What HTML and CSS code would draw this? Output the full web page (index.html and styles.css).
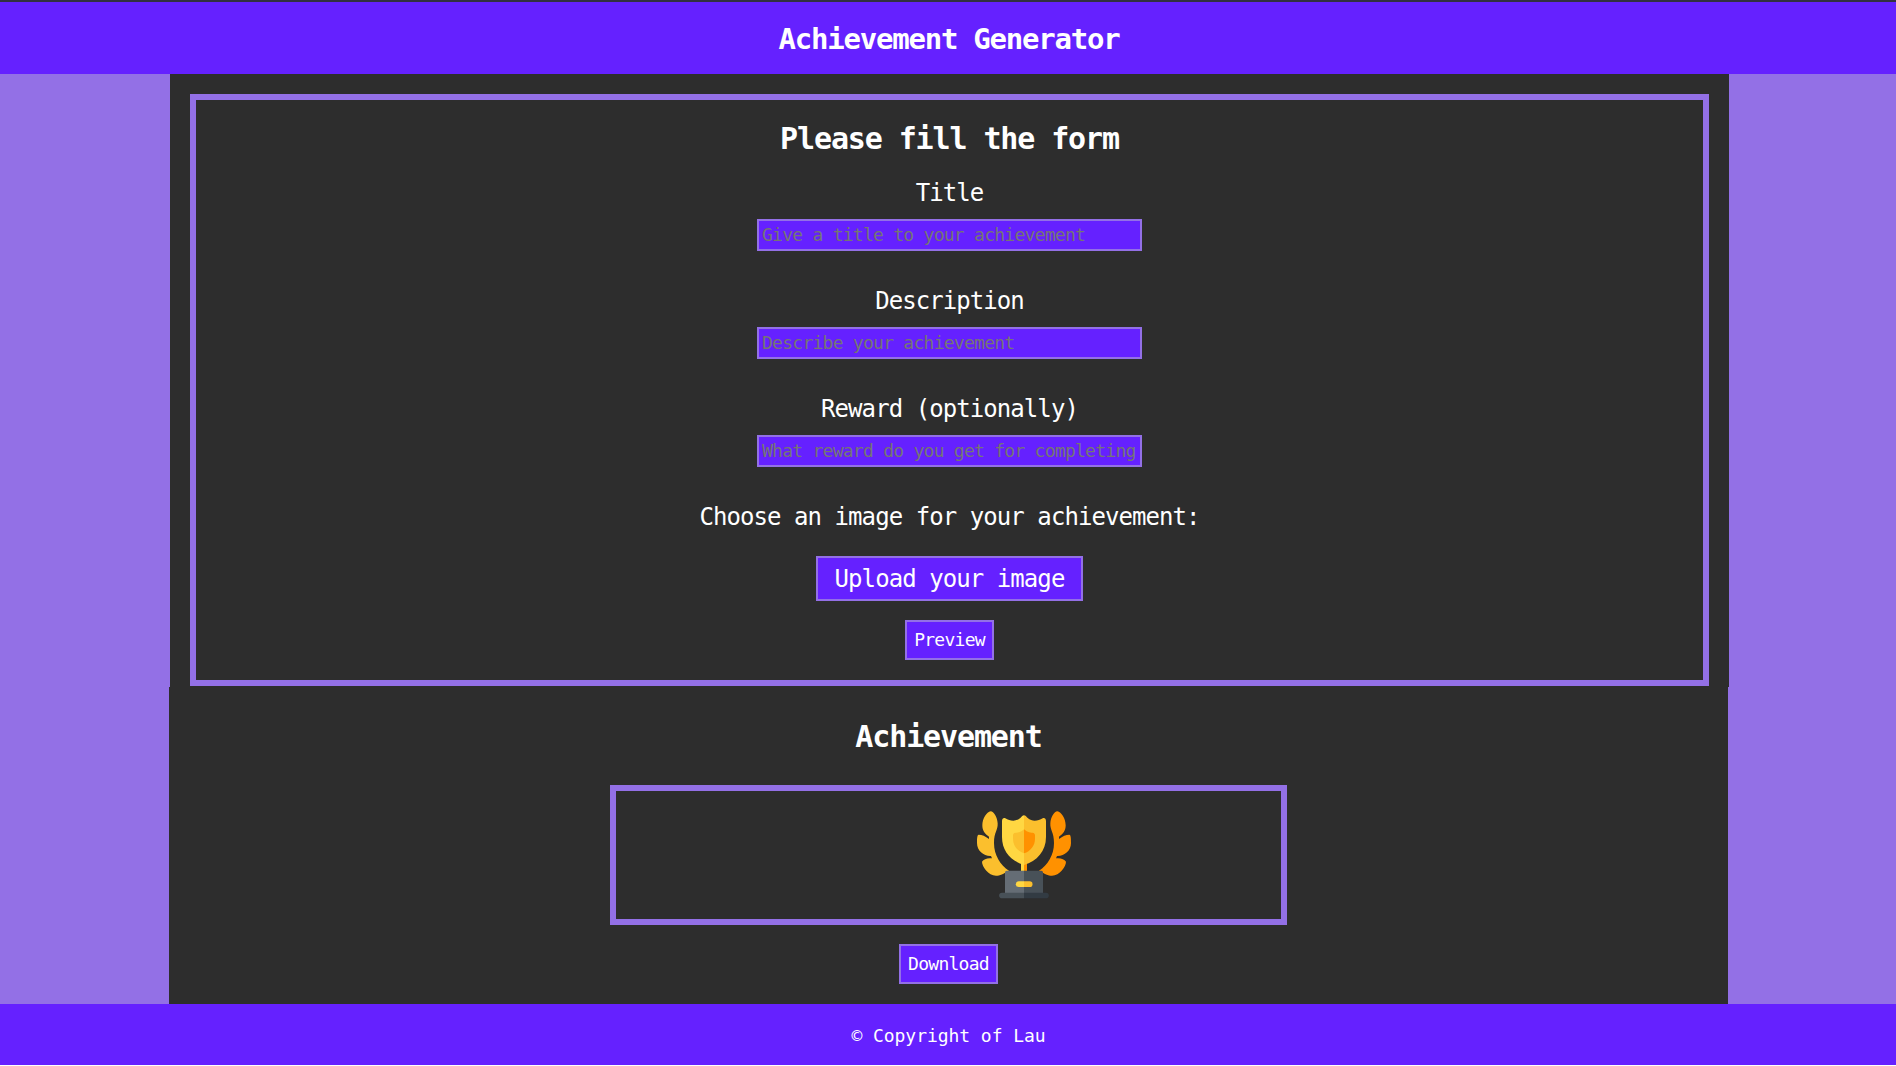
FILE: index.html
```html
<!DOCTYPE html>
<html lang="en">
<head>
<meta charset="utf-8">
<title>Achievement Generator</title>
<link rel="stylesheet" href="styles.css">
</head>
<body>
<header class="header"><h1 class="site-title">Achievement Generator</h1></header>
<main class="main">
  <section class="form-section">
    <form class="form">
      <h2 class="heading">Please fill the form</h2>
      <label class="label" for="title">Title</label>
      <input class="input" id="title" type="text" placeholder="Give a title to your achievement">
      <label class="label" for="description">Description</label>
      <input class="input" id="description" type="text" placeholder="Describe your achievement">
      <label class="label" for="reward">Reward (optionally)</label>
      <input class="input" id="reward" type="text" placeholder="What reward do you get for completing">
      <p class="label">Choose an image for your achievement:</p>
      <button class="upload" type="button">Upload your image</button>
      <button class="button" type="button">Preview</button>
    </form>
  </section>
  <section class="result">
    <h2 class="heading">Achievement</h2>
    <div class="card">
      <div class="card-text"></div>
      <svg class="trophy" viewBox="0 0 288 264" aria-label="Trophy">
        <path fill="#fbbf2d" d="M41 1C29 3 16 23 16 43C16 59 24 69 36 77V84C25 75 15 71 5 71C0 72 0 83 0 96C0 119 20 136 42 135L45 142C32 140 20 144 15 152C15 166 34 194 57 194C69 194 79 188 96 179C70 163 51 132 51 96C51 64 63 58 62 37C61 18 50 2 41 1Z"/>
        <path fill="#ff9100" transform="translate(282 0) scale(-1 1)" d="M41 1C29 3 16 23 16 43C16 59 24 69 36 77V84C25 75 15 71 5 71C0 72 0 83 0 96C0 119 20 136 42 135L45 142C32 140 20 144 15 152C15 166 34 194 57 194C69 194 79 188 96 179C70 163 51 132 51 96C51 64 63 58 62 37C61 18 50 2 41 1Z"/>
        <path fill="#ffd742" d="M132 155H141V183H132Z"/>
        <path fill="#ff9100" d="M141 155H150V183H141Z"/>
        <path fill="#ffd742" d="M141 13C137 13 134 17 130 21C115 34 98 29 85 22C80 19 75 23 75 30V78C75 121 102 150 141 162Z"/>
        <path fill="#fbbf2d" d="M141 13C145 13 148 17 152 21C167 34 184 29 197 22C202 19 207 23 207 30V78C207 121 180 150 141 162Z"/>
        <path fill="#fbbf2d" d="M141 55C130 65 120 65 112 66Q108 68 108 73V83C108 104 121 120 141 127Z"/>
        <path fill="#ff9100" d="M141 55C152 65 162 65 170 66Q174 68 174 73V83C174 104 161 120 141 127Z"/>
        <path fill="#656d75" d="M84 184Q84 179 89 179H141V247H84Z"/>
        <path fill="#485158" d="M141 179H193Q198 179 198 184V247H141Z"/>
        <path fill="#485158" d="M141 245H75A8.500 8.500 0 0 0 75 262H141Z"/>
        <path fill="#323b43" d="M141 245H207A8.500 8.500 0 0 1 207 262H141Z"/>
        <path fill="#ffd742" d="M141 211H125A8.500 8.500 0 0 0 125 228H141Z"/>
        <path fill="#fbbf2d" d="M141 211H158A8.500 8.500 0 0 1 158 228H141Z"/>
      </svg>
    </div>
    <button class="button" type="button">Download</button>
  </section>
</main>
<footer class="footer">© Copyright of Lau</footer>
</body>
</html>
```

FILE: styles.css
```css
* { box-sizing: border-box; }
html { background: #fff; overflow: hidden; }
body {
  margin: 0;
  height: 1065px;
  display: flex;
  flex-direction: column;
  border-top: 2px solid #323041;
  background: #9370e6;
  color: #fff;
  font-family: "DejaVu Sans Mono", "Liberation Mono", monospace;
}
h1, h2, p { margin: 0; }
.header {
  height: 72px;
  background: #6521ff;
  display: flex;
  justify-content: center;
  align-items: center;
}
.site-title { padding: 1px 0 0 2px; font-size: 29px; line-height: 34px; letter-spacing: -1.22px; }
.form-section {
  width: 1559px;
  height: 613px;
  margin-left: 170px;
  padding: 20px 20px 1px;
  background: #2d2d2d;
}
.form {
  height: 592px;
  border: 6px solid #9370e6;
  padding-top: 18px;
  display: flex;
  flex-direction: column;
  align-items: center;
}
.heading { height: 40px; font-size: 30px; line-height: 42px; letter-spacing: -1.12px; }
.label {
  height: 30px;
  margin-top: 20px;
  font-size: 24px;
  line-height: 30px;
  letter-spacing: -0.93px;
}
.input {
  width: 385px;
  height: 32px;
  margin: 11px 0 15px;
  padding: 0 4px 2px 3px;
  border: 2px solid #9370e6;
  border-radius: 0;
  background: #6521ff;
  color: #fff;
  font: 18px "DejaVu Sans Mono", monospace;
  letter-spacing: -0.74px;
}
.input::placeholder { color: #757575; opacity: 1; }
.upload, .button {
  border: 2px solid #9370e6;
  padding: 0;
  background: #6521ff;
  color: #fff;
  font-family: inherit;
}
.upload {
  width: 267px;
  height: 45px;
  margin: 24px 0 19px;
  font-size: 24px;
  letter-spacing: -0.93px;
}
.button { height: 40px; padding: 0 7px 2px; font-size: 18px; letter-spacing: -0.73px; }
.form .button { width: 89px; }
.result {
  width: 1559px;
  height: 317px;
  margin-left: 169px;
  padding-top: 29px;
  background: #2d2d2d;
  display: flex;
  flex-direction: column;
  align-items: center;
}
.card {
  width: 677px;
  height: 140px;
  margin: 29px 0 19px;
  padding-top: 20px;
  border: 6px solid #9370e6;
  display: grid;
  grid-template-columns: 361px auto;
}
.trophy { width: 96px; height: 88px; }
.result .button { width: 99px; }
.footer {
  height: 61px;
  padding: 1px 0 0 1px;
  background: #6521ff;
  display: flex;
  align-items: center;
  justify-content: center;
  font-size: 18px;
  letter-spacing: -0.05px;
}
```
